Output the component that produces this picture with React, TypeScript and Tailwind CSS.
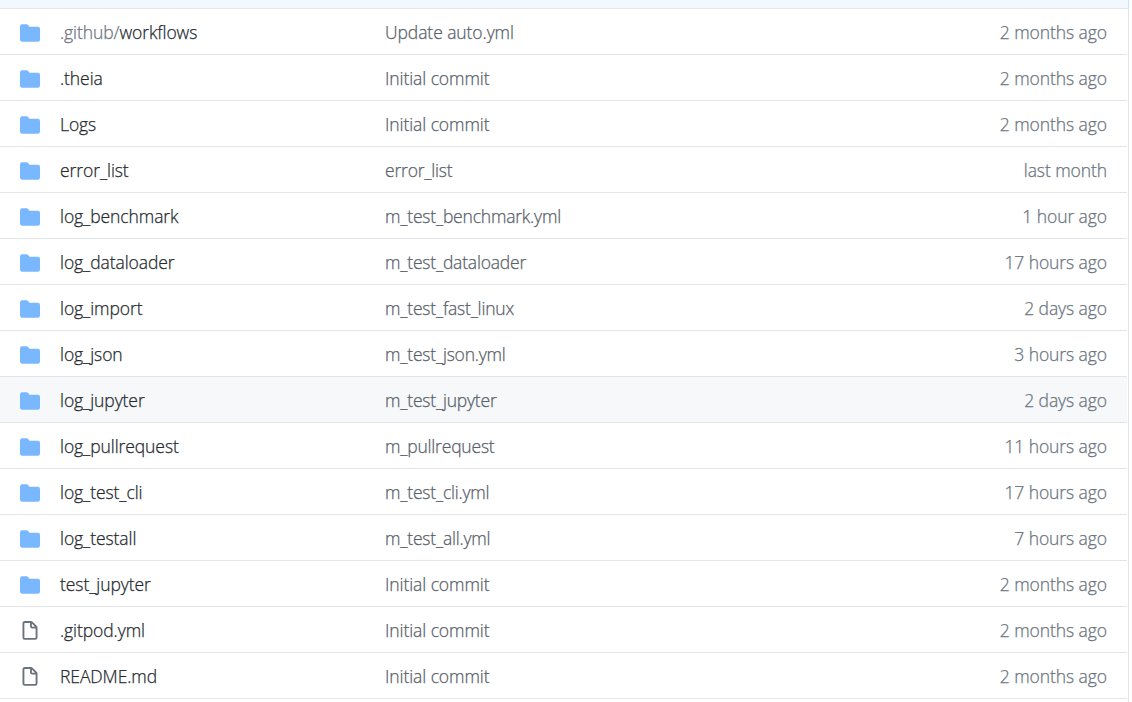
type Row = { dir?: string; name: string; message: string; age: string; file?: boolean; active?: boolean };

const rows: Row[] = [
  { dir: ".github/", name: "workflows", message: "Update auto.yml", age: "2 months ago" },
  { name: ".theia", message: "Initial commit", age: "2 months ago" },
  { name: "Logs", message: "Initial commit", age: "2 months ago" },
  { name: "error_list", message: "error_list", age: "last month" },
  { name: "log_benchmark", message: "m_test_benchmark.yml", age: "1 hour ago" },
  { name: "log_dataloader", message: "m_test_dataloader", age: "17 hours ago" },
  { name: "log_import", message: "m_test_fast_linux", age: "2 days ago" },
  { name: "log_json", message: "m_test_json.yml", age: "3 hours ago" },
  { name: "log_jupyter", message: "m_test_jupyter", age: "2 days ago", active: true },
  { name: "log_pullrequest", message: "m_pullrequest", age: "11 hours ago" },
  { name: "log_test_cli", message: "m_test_cli.yml", age: "17 hours ago" },
  { name: "log_testall", message: "m_test_all.yml", age: "7 hours ago" },
  { name: "test_jupyter", message: "Initial commit", age: "2 months ago" },
  { name: ".gitpod.yml", message: "Initial commit", age: "2 months ago", file: true },
  { name: "README.md", message: "Initial commit", age: "2 months ago", file: true },
];

function FolderIcon() {
  return (
    <svg viewBox="0 0 16 16" className="size-5 shrink-0 fill-[#79b8ff]">
      <path d="M1.75 1A1.75 1.75 0 000 2.75v10.5C0 14.216.784 15 1.75 15h12.5A1.75 1.75 0 0016 13.25v-8.5A1.75 1.75 0 0014.25 3h-6.5a.25.25 0 01-.2-.1l-.9-1.2c-.33-.44-.85-.7-1.4-.7h-3.5z" />
    </svg>
  );
}

function FileIcon() {
  return (
    <svg viewBox="0 0 16 16" className="size-5 shrink-0 fill-[#6a737d]">
      <path
        fillRule="evenodd"
        d="M3.75 1.5a.25.25 0 00-.25.25v11.5c0 .138.112.25.25.25h8.5a.25.25 0 00.25-.25V6H9.75A1.75 1.75 0 018 4.25V1.5H3.75zm5.75.56v2.19c0 .138.112.25.25.25h2.19L9.5 2.06zM2 1.75C2 .784 2.784 0 3.75 0h5.086c.464 0 .909.184 1.237.513l3.414 3.414c.329.328.513.773.513 1.237v8.086A1.75 1.75 0 0112.25 15h-8.5A1.75 1.75 0 012 13.25V1.75z"
      />
    </svg>
  );
}

export default function App() {
  return (
    <div className="flex h-[702px] w-[1132px] flex-col overflow-hidden bg-white font-['Open_Sans','Noto_Sans',sans-serif] text-[17.5px] font-light tracking-[-0.08px] [-webkit-text-stroke:0.25px_currentColor]">
      <div className="flex h-[9px] shrink-0">
        <div className="w-[1128px] border-b border-[#e1e4e8] bg-[#f1f8ff]" />
        <div className="w-px bg-[#c8e1ff]" />
      </div>
      <div className="w-[1129px] flex-1 border-r border-[#e1e4e8] pr-px">
        {rows.map((row) => (
          <div
            key={row.name}
            className={`flex h-[46px] items-center border-b border-[#e1e4e8] px-5 leading-[26px] whitespace-nowrap ${row.active ? "bg-[#f6f8fa]" : ""}`}
          >
            <div className="flex w-10 pt-[3px]">{row.file ? <FileIcon /> : <FolderIcon />}</div>
            <div className="w-[325px] pt-px text-[#24292e]">
              {row.dir && <span className="text-[#6a737d]">{row.dir}</span>}
              {row.name}
            </div>
            <div className={`flex-1 pt-px text-[#586069] ${row.message.includes("_") ? "tracking-[-0.2px]" : ""}`}>
              {row.message}
            </div>
            <div className="pt-px text-right text-[#6a737d]">{row.age}</div>
          </div>
        ))}
      </div>
    </div>
  );
}
